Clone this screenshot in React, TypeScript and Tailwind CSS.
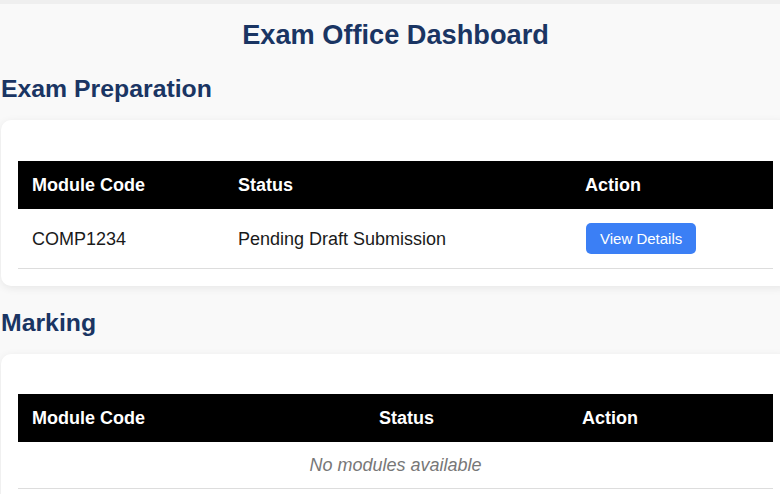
type Row = { code: string; status: string };

const prepRows: Row[] = [{ code: 'COMP1234', status: 'Pending Draft Submission' }];
const markingRows: Row[] = [];

function SectionTable({ rows, widths }: { rows: Row[]; widths: [string, string, string] }) {
  return (
    <table className="w-[755px] table-fixed border-collapse">
      <thead>
        <tr className="bg-black text-white">
          <th className={`${widths[0]} px-[14px] py-[14px] text-left text-[18px] leading-[20px] font-bold`}>Module Code</th>
          <th className={`${widths[1]} px-[14px] py-[14px] text-left text-[18px] leading-[20px] font-bold`}>Status</th>
          <th className={`${widths[2]} px-[14px] py-[14px] text-left text-[18px] leading-[20px] font-bold`}>Action</th>
        </tr>
      </thead>
      <tbody>
        {rows.length === 0 ? (
          <tr className="border-b border-[#dddddd]">
            <td colSpan={3} className="py-[13px] text-center text-[18px] leading-[20px] italic text-[#777777]">
              No modules available
            </td>
          </tr>
        ) : (
          rows.map((row) => (
            <tr key={row.code} className="border-b border-[#dddddd] text-[#1a1a1a]">
              <td className="px-[14px] py-[14px] text-[18px] leading-[20px]">{row.code}</td>
              <td className="px-[14px] py-[14px] text-[18px] leading-[20px]">{row.status}</td>
              <td className="px-[14px] py-[14px]">
                <button className="ml-px h-[31px] px-[14px] rounded-[5px] bg-[#3b7ff5] text-white text-[15px] leading-[31px]">
                  View Details
                </button>
              </td>
            </tr>
          ))
        )}
      </tbody>
    </table>
  );
}

export default function App() {
  return (
    <div className="w-[780px] h-[494px] overflow-hidden bg-[#f9f9f9] border-t-4 border-[#efefef] font-['Liberation_Sans',Arial,sans-serif]">
      <div className="w-[790px] pl-px">
        <h1 className="mt-[15px] text-center text-[27.2px] leading-[32px] font-bold text-[#1a3563]">
          Exam Office Dashboard
        </h1>

        <h2 className="mt-[24px] text-[24.8px] leading-[28px] font-bold text-[#1a3563]">Exam Preparation</h2>
        <div className="mt-[17px] w-[789px] rounded-[10px] bg-white px-[17px] pt-[41px] pb-[17px] shadow-[0_2px_8px_rgba(0,0,0,0.08)]">
          <SectionTable rows={prepRows} widths={['w-[206px]', 'w-[347px]', 'w-[202px]']} />
        </div>

        <h2 className="mt-[23px] text-[24.8px] leading-[28px] font-bold text-[#1a3563]">Marking</h2>
        <div className="mt-[17px] w-[789px] rounded-[10px] bg-white px-[17px] pt-[40px] pb-[17px] shadow-[0_2px_8px_rgba(0,0,0,0.08)]">
          <SectionTable rows={markingRows} widths={['w-[347px]', 'w-[203px]', 'w-[205px]']} />
        </div>
      </div>
    </div>
  );
}
